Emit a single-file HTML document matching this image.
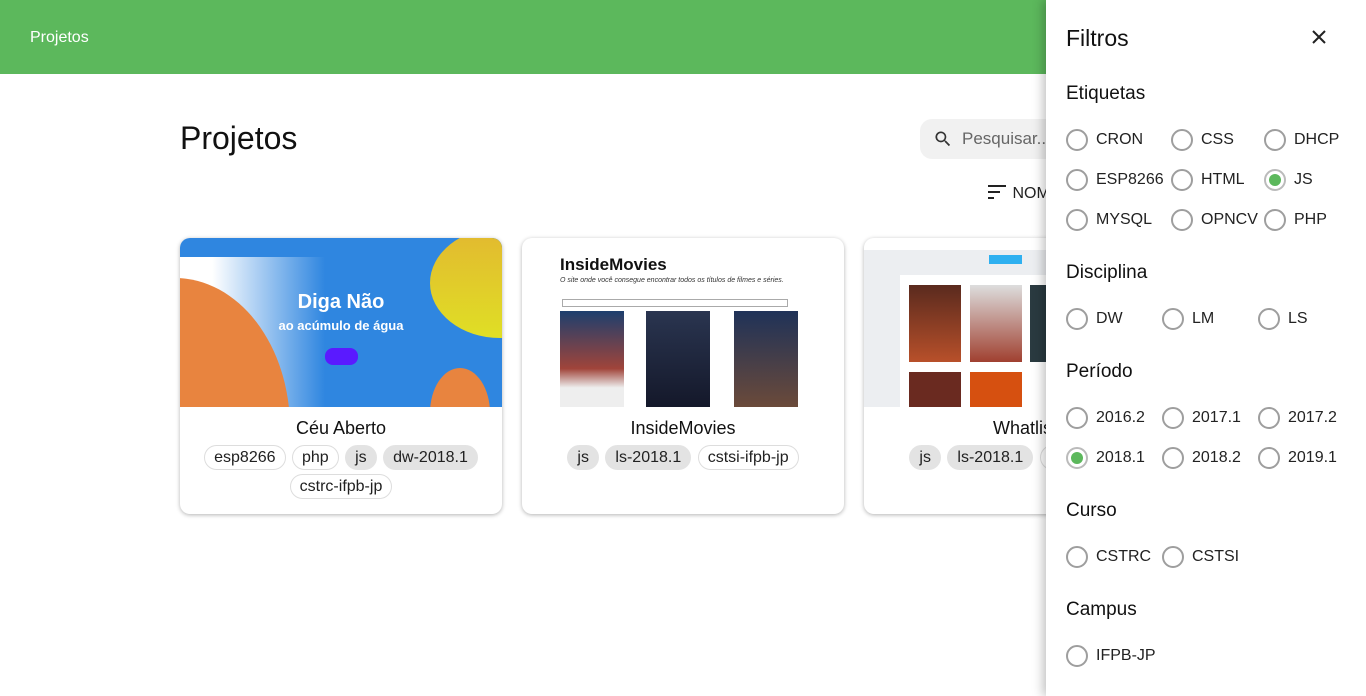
<!DOCTYPE html>
<html><head><meta charset="utf-8"><style>
*{box-sizing:border-box;margin:0;padding:0}
body{width:1366px;height:696px;overflow:hidden;background:#fff;font-family:"Liberation Sans",sans-serif;color:#212121;position:relative}
.hdr{position:absolute;left:0;top:0;width:1366px;height:74px;background:#5cb85c;color:#fff;font-size:16px;padding:29px 30px}
h1{position:absolute;left:180px;top:120px;font-size:32px;font-weight:400;color:#111}
.search{position:absolute;left:920px;top:119px;width:200px;height:40px;border-radius:12px;background:#f1f1f1;color:#666;font-size:17px;padding:10px 0 0 42px}
.sort{position:absolute;left:988px;top:184px;font-size:16px;color:#222}
.card{position:absolute;top:238px;width:322px;height:276px;border-radius:10px;box-shadow:0 1px 4px rgba(0,0,0,.3);overflow:hidden;background:#fff;text-align:center}
.img{height:169px;position:relative;overflow:hidden}
.title{font-size:18px;margin-top:11px;color:#111}
.chips{margin-top:4px;padding:0 20px;line-height:29px}
.chip{display:inline-block;height:25px;line-height:23px;padding:0 9px;border-radius:13px;font-size:16px;background:#e3e3e3;border:1px solid #e3e3e3;margin:0 1px}
.chip.o{background:#fff;border:1px solid #ddd}
.drawer{position:absolute;left:1046px;top:0;width:320px;height:696px;background:#fff;box-shadow:-3px 0 10px rgba(0,0,0,.25)}
.dt{position:absolute;left:20px;top:25px;font-size:23px;color:#111}
.sec{position:absolute;left:20px;font-size:19px;color:#111}
.r{position:absolute;font-size:16px;color:#222;height:24px;line-height:24px;padding-left:30px}
.r:before{content:"";position:absolute;left:0;top:1px;width:22px;height:22px;border:2px solid #9e9e9e;border-radius:50%;box-sizing:border-box}
.r.on:after{content:"";position:absolute;left:5px;top:6px;width:12px;height:12px;border-radius:50%;background:#5cb85c}
.r.on:before{border-color:#bbb}
</style></head><body>
<div class="hdr">Projetos</div>
<h1>Projetos</h1>
<div class="search"><svg style="position:absolute;left:13px;top:10px" width="20" height="20" viewBox="0 0 24 24"><path d="M15.5 14h-.8l-.3-.3A6.5 6.5 0 1 0 9.5 16a6.5 6.5 0 0 0 4.2-1.6l.3.3v.8l5 5 1.5-1.5-5-5zm-6 0a4.5 4.5 0 1 1 0-9 4.5 4.5 0 0 1 0 9z" fill="#333"/></svg>Pesquisar..</div>
<div class="sort"><svg width="20" height="16" viewBox="0 0 20 16" style="vertical-align:-2px"><rect x="0" y="1" width="18" height="2" fill="#222"/><rect x="0" y="7" width="12" height="2" fill="#222"/><rect x="0" y="13" width="6" height="2" fill="#222"/></svg> NOME</div>

<div class="card" style="left:180px">
 <div class="img" style="background:linear-gradient(90deg,#fff 0%,#fff 10%,#2f86e0 45%,#2f86e0 100%)">
  <div style="position:absolute;left:0;top:0;width:322px;height:19px;background:#2f86e0"></div>
  <div style="position:absolute;left:-120px;top:40px;width:230px;height:300px;border-radius:50%;background:#e8843f"></div>
  <div style="position:absolute;left:250px;top:-10px;width:140px;height:110px;border-radius:50%;background:linear-gradient(#e2b830,#e0df25)"></div>
  <div style="position:absolute;left:250px;top:130px;width:60px;height:90px;border-radius:50%;background:#e8843f"></div>
  <div style="position:absolute;left:0;top:53px;width:322px;color:#fff;font-weight:bold;font-size:20px">Diga Não</div>
  <div style="position:absolute;left:0;top:80px;width:322px;color:#fff;font-weight:bold;font-size:13px">ao acúmulo de água</div>
  <div style="position:absolute;left:145px;top:110px;width:33px;height:17px;border-radius:8px;background:#5a1aff"></div>
 </div>
 <div class="title">Céu Aberto</div>
 <div class="chips"><span class="chip o">esp8266</span> <span class="chip o">php</span> <span class="chip">js</span> <span class="chip">dw-2018.1</span><br><span class="chip o">cstrc-ifpb-jp</span></div>
</div>

<div class="card" style="left:522px">
 <div class="img">
  <div style="position:absolute;left:38px;top:17px;font-weight:bold;font-size:17px;color:#111">InsideMovies</div>
  <div style="position:absolute;left:38px;top:39px;font-size:7px;font-style:italic;color:#333">O site onde você consegue encontrar todos os títulos de filmes e séries.</div>
  <div style="position:absolute;left:40px;top:61px;width:226px;height:8px;border:1px solid #aaa"></div>
  <div style="position:absolute;left:38px;top:73px;width:64px;height:96px;background:linear-gradient(#1d3f6e,#a0443a 60%,#eee 80%)"></div>
  <div style="position:absolute;left:124px;top:73px;width:64px;height:96px;background:linear-gradient(#2a3550,#14182a)"></div>
  <div style="position:absolute;left:212px;top:73px;width:64px;height:96px;background:linear-gradient(#1f3258,#6b4a3a)"></div>
 </div>
 <div class="title">InsideMovies</div>
 <div class="chips"><span class="chip">js</span> <span class="chip">ls-2018.1</span> <span class="chip o">cstsi-ifpb-jp</span></div>
</div>

<div class="card" style="left:864px">
 <div class="img" style="background:#eceef1">
  <div style="position:absolute;left:0;top:0;width:322px;height:12px;background:#fff"></div>
  <div style="position:absolute;left:36px;top:37px;width:300px;height:140px;background:#fff"></div>
  <div style="position:absolute;left:125px;top:17px;width:33px;height:9px;background:#2fb0f0"></div>
  <div style="position:absolute;left:45px;top:47px;width:52px;height:77px;background:linear-gradient(#5a2a1e,#b8502a)"></div>
  <div style="position:absolute;left:106px;top:47px;width:52px;height:77px;background:linear-gradient(#ddd,#a04030)"></div>
  <div style="position:absolute;left:166px;top:47px;width:52px;height:77px;background:#2a3a40"></div>
  <div style="position:absolute;left:45px;top:134px;width:52px;height:40px;background:#6a2a20"></div>
  <div style="position:absolute;left:106px;top:134px;width:52px;height:40px;background:#d65010"></div>
 </div>
 <div class="title">Whatlist</div>
 <div class="chips"><span class="chip">js</span> <span class="chip">ls-2018.1</span> <span class="chip o">cstsi-ifpb-jp</span></div>
</div>

<div class="drawer">
 <div class="dt">Filtros</div>
 <svg style="position:absolute;left:265px;top:29px" width="16" height="16" viewBox="0 0 16 16"><path d="M2 2L14 14M14 2L2 14" stroke="#222" stroke-width="2"/></svg>
 <div class="sec" style="top:83px">Etiquetas</div>
 <div class="r" style="left:20px;top:128px">CRON</div><div class="r" style="left:125px;top:128px">CSS</div><div class="r" style="left:218px;top:128px">DHCP</div>
 <div class="r" style="left:20px;top:168px">ESP8266</div><div class="r" style="left:125px;top:168px">HTML</div><div class="r on" style="left:218px;top:168px">JS</div>
 <div class="r" style="left:20px;top:208px">MYSQL</div><div class="r" style="left:125px;top:208px">OPNCV</div><div class="r" style="left:218px;top:208px">PHP</div>
 <div class="sec" style="top:262px">Disciplina</div>
 <div class="r" style="left:20px;top:307px">DW</div><div class="r" style="left:116px;top:307px">LM</div><div class="r" style="left:212px;top:307px">LS</div>
 <div class="sec" style="top:361px">Período</div>
 <div class="r" style="left:20px;top:406px">2016.2</div><div class="r" style="left:116px;top:406px">2017.1</div><div class="r" style="left:212px;top:406px">2017.2</div>
 <div class="r on" style="left:20px;top:446px">2018.1</div><div class="r" style="left:116px;top:446px">2018.2</div><div class="r" style="left:212px;top:446px">2019.1</div>
 <div class="sec" style="top:500px">Curso</div>
 <div class="r" style="left:20px;top:545px">CSTRC</div><div class="r" style="left:116px;top:545px">CSTSI</div>
 <div class="sec" style="top:599px">Campus</div>
 <div class="r" style="left:20px;top:644px">IFPB-JP</div>
</div>
</body></html>
